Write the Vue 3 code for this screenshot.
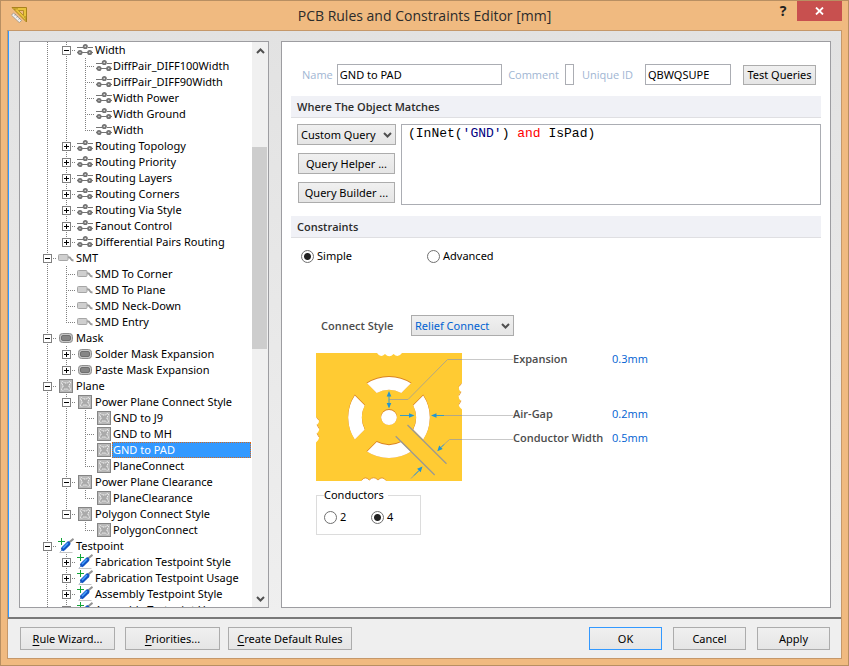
<script setup>
import { computed, ref } from 'vue'

const nodes = [
  { level: 1, icon: 'routing', label: 'Width', box: 'minus' },
  { level: 2, icon: 'routing', label: 'DiffPair_DIFF100Width' },
  { level: 2, icon: 'routing', label: 'DiffPair_DIFF90Width' },
  { level: 2, icon: 'routing', label: 'Width Power' },
  { level: 2, icon: 'routing', label: 'Width Ground' },
  { level: 2, icon: 'routing', label: 'Width' },
  { level: 1, icon: 'routing', label: 'Routing Topology', box: 'plus' },
  { level: 1, icon: 'routing', label: 'Routing Priority', box: 'plus' },
  { level: 1, icon: 'routing', label: 'Routing Layers', box: 'plus' },
  { level: 1, icon: 'routing', label: 'Routing Corners', box: 'plus' },
  { level: 1, icon: 'routing', label: 'Routing Via Style', box: 'plus' },
  { level: 1, icon: 'routing', label: 'Fanout Control', box: 'plus' },
  { level: 1, icon: 'routing', label: 'Differential Pairs Routing', box: 'plus' },
  { level: 0, icon: 'smt', label: 'SMT', box: 'minus' },
  { level: 1, icon: 'smt', label: 'SMD To Corner' },
  { level: 1, icon: 'smt', label: 'SMD To Plane' },
  { level: 1, icon: 'smt', label: 'SMD Neck-Down' },
  { level: 1, icon: 'smt', label: 'SMD Entry' },
  { level: 0, icon: 'mask', label: 'Mask', box: 'minus' },
  { level: 1, icon: 'mask', label: 'Solder Mask Expansion', box: 'plus' },
  { level: 1, icon: 'mask', label: 'Paste Mask Expansion', box: 'plus' },
  { level: 0, icon: 'plane', label: 'Plane', box: 'minus' },
  { level: 1, icon: 'plane', label: 'Power Plane Connect Style', box: 'minus' },
  { level: 2, icon: 'plane', label: 'GND to J9' },
  { level: 2, icon: 'plane', label: 'GND to MH' },
  { level: 2, icon: 'plane', label: 'GND to PAD' },
  { level: 2, icon: 'plane', label: 'PlaneConnect' },
  { level: 1, icon: 'plane', label: 'Power Plane Clearance', box: 'minus' },
  { level: 2, icon: 'plane', label: 'PlaneClearance' },
  { level: 1, icon: 'plane', label: 'Polygon Connect Style', box: 'minus' },
  { level: 2, icon: 'plane', label: 'PolygonConnect' },
  { level: 0, icon: 'probe', label: 'Testpoint', box: 'minus' },
  { level: 1, icon: 'probe', label: 'Fabrication Testpoint Style', box: 'plus' },
  { level: 1, icon: 'probe', label: 'Fabrication Testpoint Usage', box: 'plus' },
  { level: 1, icon: 'probe', label: 'Assembly Testpoint Style', box: 'plus' },
  { level: 1, icon: 'probe', label: 'Assembly Testpoint Usage', box: 'plus' },
]

// The list carries on below the visible part, so open levels keep their guides.
function continues(index, level) {
  const next = nodes.slice(index + 1).find((n) => n.level <= level)
  return next ? next.level === level : true
}

const rows = computed(() =>
  nodes.map((node, i) => ({
    ...node,
    cells: Array.from({ length: node.level + 1 }, (_, k) => {
      const open = continues(i, k)
      if (k < node.level) return open ? 'full' : 'none'
      return open ? 'full branch' : 'half branch'
    }),
  })),
)

const selected = ref(25)
const ruleName = ref('GND to PAD')
const comment = ref('')
const uniqueId = ref('QBWQSUPE')
const scope = ref('Custom Query')
const query = ref("(InNet('GND') and IsPad)")
const mode = ref('simple')
const connectStyle = ref('Relief Connect')
const conductors = ref('4')
const sizes = ref([
  { id: 'expansion', label: 'Expansion', value: '0.3mm' },
  { id: 'airgap', label: 'Air-Gap', value: '0.2mm' },
  { id: 'conductor', label: 'Conductor Width', value: '0.5mm' },
])

const tokens = computed(() =>
  query.value
    .split(/('[^']*'|\b(?:and|or|not)\b)/)
    .filter(Boolean)
    .map((text) => ({
      text,
      kind: text.startsWith("'") ? 'string' : /^(and|or|not)$/.test(text) ? 'keyword' : 'plain',
    })),
)
</script>

<template>
  <div class="window">
    <header class="titlebar">
      <svg class="app-icon" viewBox="0 0 16 16" aria-hidden="true">
        <path d="M1 .5H15.5V15Z" fill="#e9c33c" stroke="#a9821c" />
        <path d="M7.5 3.5H12.5V8.5Z" fill="#f0ba80" stroke="#a9821c" stroke-width=".8" />
        <path d="M4 1v2M6 1v1.500M14 12h1.500M13 10h2" stroke="#8a6a14" stroke-width=".7" />
        <path d="M2.500 6 10.500 13.500 8.300 15.600.5 8.200Z" fill="#f2f2f2" stroke="#9a948c" stroke-width=".8" />
        <path d="M3.600 8.500 5 7M5.600 10.500 7 9M7.600 12.500 9 11" stroke="#8c8c8c" stroke-width=".8" />
      </svg>
      <h1>PCB Rules and Constraints Editor [mm]</h1>
      <div class="caption">
        <button class="help" type="button" aria-label="Help">?</button>
        <button class="close" type="button" aria-label="Close">
          <svg viewBox="0 0 9 8" aria-hidden="true"><path d="M1 .5 8 7.500M8 .5 1 7.500" stroke="#fff" stroke-width="1.800" /></svg>
        </button>
      </div>
    </header>

    <div class="client">
      <main class="workspace">
        <nav class="tree-panel" aria-label="Design rules">
          <ul class="tree" role="tree">
            <li v-for="(row, i) in rows" :key="i" class="node" role="treeitem" :aria-selected="i === selected" @click="selected = i">
              <span v-for="(cell, k) in row.cells" :key="k" class="cell" :class="cell">
                <button v-if="row.box && k === row.level" class="expander" type="button" :aria-label="row.box === 'plus' ? 'Expand' : 'Collapse'">
                  <svg viewBox="0 0 9 9" aria-hidden="true">
                    <rect x=".5" y=".5" width="8" height="8" fill="#fff" stroke="#808080" />
                    <path d="M2 4.500h5" stroke="#000" />
                    <path v-if="row.box === 'plus'" d="M4.500 2v5" stroke="#000" />
                  </svg>
                </button>
              </span>
              <svg class="node-icon" viewBox="0 0 16 16" aria-hidden="true">
                <g v-if="row.icon === 'routing'" fill="#d8d8d8" stroke="#747474">
                  <path d="M0 5.500H6M11 5.500H16M0 10.500H16" />
                  <circle cx="8.300" cy="4.500" r="1.700" stroke-width="1.700" />
                  <circle cx="3" cy="10.500" r="1.600" stroke-width="1.900" />
                  <circle cx="12.700" cy="10.500" r="1.600" stroke-width="1.900" />
                </g>
                <g v-else-if="row.icon === 'smt'">
                  <path d="M9 7.500C12 6.500 12.500 8 13 9.200S14.500 10.500 15.500 10.500" fill="none" stroke="#9a9a9a" stroke-width="1.800" />
                  <rect x=".5" y="4.500" width="9.500" height="6" rx="1" fill="#cfcfcf" stroke="#a6a6a6" />
                </g>
                <g v-else-if="row.icon === 'mask'">
                  <rect x="1.500" y="3.500" width="13" height="9" rx="3" fill="#c6c6c6" stroke="#8e8e8e" />
                  <rect x="3.500" y="5.500" width="9" height="5" rx="1.500" fill="#868686" stroke="#6f6f6f" />
                </g>
                <g v-else-if="row.icon === 'plane'">
                  <rect x="1.500" y="1.500" width="13" height="13" fill="#b8b8b8" stroke="#858585" />
                  <path d="M4 6.200 3.500 4 5 3.500 6.500 5H9.500L11 3.500 12.500 4 12 6.200 11 7V9L12 9.800 12.500 12 11 12.500 9.500 11H6.500L5 12.500 3.500 12 4 9.800 5 9V7Z" fill="#aaa" stroke="#f4f4f4" stroke-dasharray="1.500 .6" />
                </g>
                <g v-else fill="none">
                  <path d="M1.500 14.500H14.500" stroke="#c4c4c4" />
                  <path d="M10.500 5 15.500.8" stroke="#929292" stroke-width="2" />
                  <path d="M2.500 13.500 5 11" stroke="#6a8db8" />
                  <path d="M5.200 10.800 10.300 5.700" stroke="#1254c4" stroke-width="4.400" stroke-linecap="round" />
                  <path d="M5.400 9.800 9.500 5.600" stroke="#49a4ff" stroke-width="1.500" stroke-linecap="round" />
                  <path d="M0 3.500H7M3.500 0V7" stroke="#14a538" />
                </g>
              </svg>
              <span class="node-label" :class="{ selected: i === selected, deep: row.level === 2 }">{{ row.label }}</span>
            </li>
          </ul>
          <div class="scrollbar">
            <button type="button" aria-label="Scroll up">
              <svg viewBox="0 0 9 6" aria-hidden="true"><path d="M1 5 4.500 1.500 8 5" fill="none" stroke="#505050" stroke-width="2" /></svg>
            </button>
            <div class="track"><div class="thumb"></div></div>
            <button type="button" aria-label="Scroll down">
              <svg viewBox="0 0 9 6" aria-hidden="true"><path d="M1 1 4.500 4.500 8 1" fill="none" stroke="#505050" stroke-width="2" /></svg>
            </button>
          </div>
        </nav>

        <section class="editor">
          <div class="identity">
            <label for="rule-name">Name</label>
            <input id="rule-name" v-model="ruleName" class="field name" type="text" />
            <label for="rule-comment">Comment</label>
            <input id="rule-comment" v-model="comment" class="field comment" type="text" />
            <label for="rule-id">Unique ID</label>
            <input id="rule-id" v-model="uniqueId" class="field uid" type="text" />
            <button class="btn test" type="button">Test Queries</button>
          </div>

          <h2>Where The Object Matches</h2>
          <div class="matches">
            <div class="match-tools">
              <span class="dropdown">
                <select v-model="scope" aria-label="Query scope">
                  <option>Custom Query</option>
                </select>
                <svg viewBox="0 0 9 6" aria-hidden="true"><path d="M1 1 4.500 4.500 8 1" fill="none" stroke="#505050" stroke-width="2" /></svg>
              </span>
              <button class="btn" type="button">Query Helper ...</button>
              <button class="btn" type="button">Query Builder ...</button>
            </div>
            <div class="query">
              <pre aria-hidden="true"><span v-for="(t, i) in tokens" :key="i" :class="t.kind">{{ t.text }}</span></pre>
              <textarea v-model="query" aria-label="Query" spellcheck="false"></textarea>
            </div>
          </div>

          <h2>Constraints</h2>
          <div class="modes">
            <label class="radio"><input v-model="mode" type="radio" name="mode" value="simple" />Simple</label>
            <label class="radio"><input v-model="mode" type="radio" name="mode" value="advanced" />Advanced</label>
          </div>

          <div class="constraints">
            <div class="style-row">
              <label for="connect-style">Connect Style</label>
              <span class="dropdown blue">
                <select id="connect-style" v-model="connectStyle">
                  <option>Relief Connect</option>
                </select>
                <svg viewBox="0 0 9 6" aria-hidden="true"><path d="M1 1 4.500 4.500 8 1" fill="none" stroke="#505050" stroke-width="2" /></svg>
              </span>
            </div>

            <div class="relief">
              <svg class="diagram" viewBox="0 0 197 128" role="img" aria-label="Relief connection with four conductors">
                <defs>
                  <path id="slot" d="M-22.500-34.200A41 41 0 0 1 22.500-34.200L12.300-24A27 27 0 0 0-12.300-24Z" />
                  <clipPath id="cutouts">
                    <use href="#slot" transform="translate(73 64)" />
                    <use href="#slot" transform="translate(73 64) rotate(90)" />
                    <use href="#slot" transform="translate(73 64) rotate(180)" />
                    <use href="#slot" transform="translate(73 64) rotate(270)" />
                    <circle cx="73" cy="64" r="8" />
                  </clipPath>
                </defs>
                <rect width="146" height="128" fill="#ffcb33" />
                <g clip-path="url(#cutouts)">
                  <rect width="146" height="128" fill="#d98324" />
                  <g transform="translate(73 65)" fill="#fff">
                    <use href="#slot" />
                    <use href="#slot" transform="rotate(90)" />
                    <use href="#slot" transform="rotate(180)" />
                    <use href="#slot" transform="rotate(270)" />
                    <circle r="8" />
                  </g>
                </g>
                <g fill="#fff">
                  <path d="M61 0Q64.500 5.500 69 1 73.300 5.500 77.600 1 82 5.500 86 0Z" />
                  <path d="M45 128Q49 122.500 53.300 127 57.700 122.500 62 127 66.300 122.500 70.500 128Z" />
                  <path d="M0 64Q5.500 67.500 1 71.700 5.500 76 1 80.500 5.500 85 0 89.500Z" />
                  <path d="M146 30Q140 34.300 145 38.800 140 43.300 145 47.800 140 52.300 146 56.500Z" />
                </g>
                <g fill="none" stroke="#df8a22" stroke-width=".8">
                  <path d="M45.500 127.500Q49 122.500 53.300 127 57.700 122.500 62 127 66.300 122.500 70 127.500" />
                  <path d="M.5 64.500 3 67.300M1 71.700 3 75.500M1 80.500 3 84M145.500 30.500 143 33.500M145 38.800 143 42.500M145 47.800 143 51.500" />
                </g>
                <g fill="none" stroke="#b3a884">
                  <path d="M73 46.500H92L131.500 6.500H146M84 62.500H95M119 62.500H146M124 95 133.500 86.500H146" />
                  <path d="M95 125.500 103 117.500" stroke="#8fa3a0" />
                  <path d="M91.500 72 130.500 110.800M79.700 83.300 118.700 122" stroke="#9c9a91" stroke-width="1.300" />
                </g>
                <path d="M146 6.500H197M146 62.500H197M146 86.500H197" stroke="#c9c9c9" />
                <g stroke="#3a9cc4">
                  <path d="M73 42V52M84 62.500H94M120 62.500H128M125 94.500 128 91.500M98 122.500 103 117.500" />
                </g>
                <g fill="#2196d3">
                  <path d="M73 38 75.300 43.500H70.700ZM73 55.500 75.300 50H70.700Z" />
                  <path d="M98.500 62.500 93 60.300V64.700ZM115 62.500 120.500 60.300V64.700Z" />
                  <path d="M121.300 98.200 123.200 92.500 126.700 96ZM106.500 113.500 104.600 119.200 101.100 115.700Z" />
                </g>
              </svg>
              <div class="sizes">
                <div v-for="s in sizes" :key="s.id" class="size">
                  <label :for="s.id">{{ s.label }}</label>
                  <input :id="s.id" v-model="s.value" type="text" />
                </div>
              </div>
            </div>

            <fieldset>
              <legend>Conductors</legend>
              <label class="radio"><input v-model="conductors" type="radio" name="conductors" value="2" />2</label>
              <label class="radio"><input v-model="conductors" type="radio" name="conductors" value="4" />4</label>
            </fieldset>
          </div>
        </section>
      </main>

      <footer class="actions">
        <button class="btn wide" type="button"><u>R</u>ule Wizard...</button>
        <button class="btn wide" type="button"><u>P</u>riorities...</button>
        <button class="btn defaults" type="button"><u>C</u>reate Default Rules</button>
        <span class="spacer"></span>
        <button class="btn dialog primary" type="button">OK</button>
        <button class="btn dialog" type="button">Cancel</button>
        <button class="btn dialog" type="button">Apply</button>
      </footer>
    </div>
  </div>
</template>

<style>
body {
  margin: 0;
}
</style>

<style scoped>
* {
  box-sizing: border-box;
}

.window {
  display: flex;
  flex-direction: column;
  height: 100vh;
  padding: 0 6px 6px;
  border: 1px solid #b88f62;
  background: #f0ba80;
  color: #000;
  font: 11px/16px "Noto Sans", "Open Sans", sans-serif;
}

button,
input,
select {
  margin: 0;
  color: inherit;
  font: inherit;
}

/* Title bar */
.titlebar {
  display: grid;
  grid-template: 29px / 1fr auto 1fr;
  flex: none;
}

.app-icon {
  width: 16px;
  height: 16px;
  margin: 6px 0 0 4px;
}

h1 {
  margin: 0;
  color: #2b2b2b;
  font: 14px/30px "Open Sans", sans-serif;
}

.caption {
  display: flex;
  justify-content: flex-end;
  align-items: flex-start;
}

.caption button {
  display: flex;
  align-items: center;
  justify-content: center;
  height: 20px;
  padding: 0;
  border: 0;
  background: none;
}

.caption .help {
  width: 28px;
  color: #222;
  font-size: 14px;
  font-weight: 700;
}

.caption .close {
  width: 45px;
  background: #c8504f;
}

.close svg {
  width: 9px;
  height: 8px;
}

/* Client area */
.client {
  display: flex;
  flex: 1;
  flex-direction: column;
  min-height: 0;
  border: 1px solid #c5986a;
  background: #efefef;
}

.workspace {
  display: flex;
  flex: 1;
  gap: 12px;
  min-height: 0;
  padding: 10px 10px 9px;
  border-left: 1px solid #3399ff;
  background: linear-gradient(#e2e2e2, #efefef);
}

/* Tree */
.tree-panel {
  display: flex;
  flex: 0 0 250px;
  min-height: 0;
  border: 1px solid #9d9da1;
  background: #fff;
}

.tree {
  flex: 1;
  margin: 0;
  padding: 0 1px 0 18px;
  overflow: hidden;
  list-style: none;
}

.node {
  display: flex;
  height: 16px;
  white-space: nowrap;
}

.cell {
  display: grid;
  grid-template: 16px / 19px;
}

.cell > *,
.cell::before,
.cell::after {
  grid-area: 1 / 1;
}

.cell::before,
.cell::after {
  content: "";
}

.cell::before {
  width: 1px;
  margin-left: 9px;
}

.full::before,
.half::before {
  background: repeating-linear-gradient(#808080 0 1px, #fff 1px 2px);
}

.half::before {
  height: 8px;
}

.branch::after {
  height: 1px;
  margin: 8px 0 0 9px;
  background: repeating-linear-gradient(90deg, #808080 0 1px, #fff 1px 2px);
}

.expander {
  z-index: 1;
  display: block;
  width: 9px;
  height: 9px;
  margin: 4px 0 0 5px;
  padding: 0;
  border: 0;
  background: none;
}

.expander svg {
  display: block;
  width: 9px;
  height: 9px;
}

.node-icon {
  flex: none;
  width: 16px;
  height: 16px;
  margin-left: 1px;
}

.node-label {
  padding: 0 1px;
  border: 1px solid transparent;
  line-height: 14px;
}

.node-label.deep {
  padding: 0;
}

.node-label.selected {
  flex: 1;
  border: 1px dotted #d2691e;
  background: #3399ff;
  color: #fff;
}

.scrollbar {
  display: flex;
  flex: 0 0 16px;
  flex-direction: column;
  background: #f0f0f0;
}

.scrollbar button {
  display: flex;
  flex: 0 0 17px;
  align-items: center;
  justify-content: center;
  padding: 0;
  border: 0;
  background: none;
}

.scrollbar svg {
  width: 9px;
  height: 6px;
}

.track {
  flex: 1;
  padding-right: 1px;
}

.thumb {
  height: 38%;
  margin-top: 88px;
  background: #cdcdcd;
}

/* Editor */
.editor {
  flex: 1;
  min-width: 0;
  padding: 22px 9px 0;
  overflow: hidden;
  border: 1px solid #9d9da1;
  background: #fff;
}

.identity {
  display: flex;
  align-items: center;
  margin-bottom: 11px;
  padding: 0 5px 0 11px;
}

.identity label {
  color: #9fb6d3;
  font-family: "Open Sans", sans-serif;
}

.field {
  height: 21px;
  padding: 0 2px;
  border: 1px solid #abadb3;
  background: #fff;
}

.name {
  flex: 1;
  min-width: 60px;
  margin: 0 6px 0 4px;
}

.comment {
  width: 9px;
  margin: 0 8px 0 6px;
  padding: 0;
}

.uid {
  width: 86px;
  margin: 0 12px;
}

.btn {
  height: 21px;
  padding: 0;
  border: 1px solid #acacac;
  background: linear-gradient(#f0f0f0, #e5e5e5);
  text-align: center;
}

.test {
  width: 73px;
  height: 20px;
}

h2 {
  margin: 0;
  padding: 0 6px;
  border-bottom: 1px solid #dfdfe2;
  background: #f0f1f6;
  color: #2c2c2c;
  font: 600 11px/21px "Open Sans", sans-serif;
}

.matches {
  display: flex;
  gap: 5px;
  margin-bottom: 11px;
  padding: 6px 0 0 6px;
}

.match-tools {
  display: flex;
  flex: 0 0 99px;
  flex-direction: column;
  gap: 8px;
}

.match-tools .btn {
  margin: 0 1px;
}

.dropdown {
  display: grid;
  align-items: center;
}

.dropdown > * {
  grid-area: 1 / 1;
}

.dropdown select {
  width: 100%;
  height: 21px;
  padding: 0 3px;
  appearance: none;
  border: 1px solid #acacac;
  border-radius: 0;
  background: linear-gradient(#f0f0f0, #e5e5e5);
}

.dropdown svg {
  justify-self: end;
  width: 9px;
  height: 6px;
  margin-right: 4px;
  pointer-events: none;
}

.query {
  display: grid;
  flex: 1;
  height: 81px;
  border: 1px solid #abadb3;
}

.query > * {
  grid-area: 1 / 1;
  margin: 0;
  padding: 1px 6px;
  font: 13px/16px "Liberation Mono", monospace;
  white-space: pre-wrap;
}

.query textarea {
  border: 0;
  outline: 0;
  background: none;
  color: transparent;
  caret-color: #000;
  resize: none;
}

.string {
  color: #000080;
}

.keyword {
  color: #ff0000;
}

.radio {
  display: flex;
  gap: 3px;
  align-items: center;
}

.radio input {
  width: 13px;
  height: 13px;
  appearance: none;
  border: 1px solid #707070;
  border-radius: 50%;
  background: #fff;
}

.radio input:checked {
  background: radial-gradient(circle, #222 3px, #fff 4px);
}

.modes {
  display: grid;
  grid-template-columns: 126px auto;
  justify-content: start;
  padding: 10px;
}

.constraints {
  padding: 41px 0 0 25px;
}

.style-row {
  display: grid;
  grid-template-columns: 90px 103px;
  align-items: center;
  margin-bottom: 17px;
  padding-left: 5px;
}

.style-row label,
.size label {
  color: #4c4c4c;
  font: 600 11px/16px "Open Sans", sans-serif;
}

.blue select {
  color: #0062d2;
}

.relief {
  display: flex;
}

.diagram {
  flex: none;
  width: 197px;
  height: 128px;
}

.sizes {
  display: grid;
  grid-template-rows: 12px 37px 24px 24px;
  align-content: start;
}

.size {
  display: grid;
  grid-template: 16px / 99px 60px;
  align-content: center;
  align-items: center;
}

.size:nth-child(2) {
  grid-row: 3;
}

.size:nth-child(3) {
  grid-row: 4;
}

.size input {
  width: 60px;
  height: 16px;
  padding: 0;
  border: 0;
  background: none;
  color: #0062d2;
  font-family: "Open Sans", sans-serif;
}

fieldset {
  display: grid;
  grid-template-columns: 47px auto;
  justify-content: start;
  width: 105px;
  margin: 6px 0 0;
  padding: 6px 7px 9px;
  border: 1px solid #dcdcdc;
}

legend {
  padding: 0 4px 0 0;
}

/* Footer */
.actions {
  display: flex;
  flex: 0 0 41px;
  padding: 8px 11px 8px 12px;
  border-top: 2px solid #787878;
}

.actions .btn {
  height: 23px;
}

.wide {
  width: 95px;
}

.wide + .wide {
  margin: 0 8px 0 10px;
}

.defaults {
  width: 124px;
}

.spacer {
  flex: 1;
}

.dialog + .dialog {
  margin-left: 11px;
}

.dialog {
  width: 73px;
}

.actions .primary {
  border: 1px solid #3399ff;
}

u {
  text-underline-offset: 2px;
}
</style>
